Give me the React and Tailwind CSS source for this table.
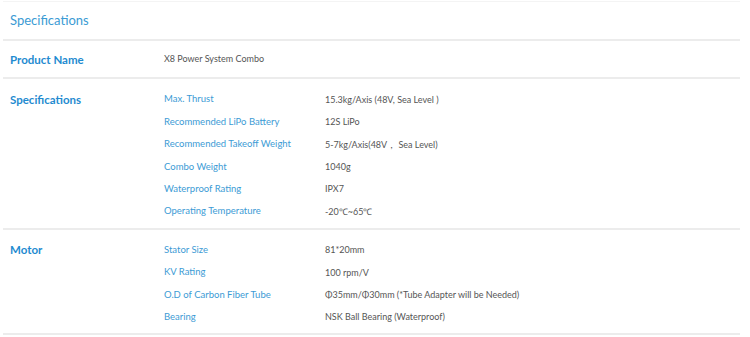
import React from "react";

const sections = [
  {
    title: "Product Name",
    rows: [["", "X8 Power System Combo"]],
  },
  {
    title: "Specifications",
    rows: [
      ["Max. Thrust", "15.3kg/Axis (48V, Sea Level )"],
      ["Recommended LiPo Battery", "12S LiPo"],
      ["Recommended Takeoff Weight", "5-7kg/Axis(48V， Sea Level)"],
      ["Combo Weight", "1040g"],
      ["Waterproof Rating", "IPX7"],
      ["Operating Temperature", "-20℃~65℃"],
    ],
  },
  {
    title: "Motor",
    rows: [
      ["Stator Size", "81*20mm"],
      ["KV Rating", "100 rpm/V"],
      ["O.D of Carbon Fiber Tube", "Φ35mm/Φ30mm (*Tube Adapter will be Needed)"],
      ["Bearing", "NSK Ball Bearing (Waterproof)"],
    ],
  },
];

function Section({ title, rows }) {
  const pad = rows.length > 1 ? "pt-[9px] pb-[5px]" : "py-[7px]";
  return (
    <div className={`grid grid-cols-[161px_161px_1fr] border-b-2 border-[#ececec] ${pad}`}>
      {rows.map(([label, value], i) => (
        <React.Fragment key={i}>
          <div className="pl-[7px] h-[22.4px] flex items-center text-[11.5px] font-bold text-[#1f8bd0]">
            {i === 0 ? title : ""}
          </div>
          {label ? (
            <div className="h-[22.4px] flex items-center text-[9.5px] text-[#3c9bd5]">{label}</div>
          ) : null}
          <div className={`h-[22.4px] flex items-center text-[9px] text-[#555] ${label ? "" : "col-span-2"}`}>
            {value}
          </div>
        </React.Fragment>
      ))}
    </div>
  );
}

export default function App() {
  return (
    <div className="w-[750px] h-[337px] bg-white overflow-hidden pt-px font-['Lato','Liberation_Sans',sans-serif]">
      <div className="ml-[3px] w-[737px] border-t border-[#f4f4f4]">
        <div className="h-[39px] flex items-center pl-[7px] border-b-2 border-[#ececec]">
          <h2 className="text-[13px] text-[#3b9bd4] font-normal">Specifications</h2>
        </div>
        {sections.map((s) => (
          <Section key={s.title} title={s.title} rows={s.rows} />
        ))}
      </div>
    </div>
  );
}
